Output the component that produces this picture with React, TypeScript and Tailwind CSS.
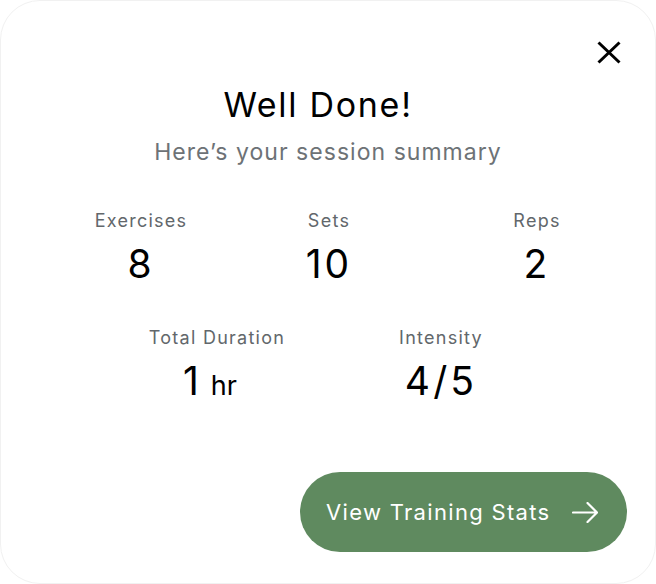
import React from 'react';

const Stat: React.FC<{ label: string; value: React.ReactNode; className?: string }> = ({ label, value, className }) => (
  <div className={`flex shrink-0 flex-col items-center whitespace-nowrap ${className ?? ''}`}>
    <span className="text-[18px] leading-[22px] tracking-[0.07em] text-[#62676b]">{label}</span>
    <span className="mt-[10px] text-[39px] leading-[44px] tracking-[0.08em] text-black">{value}</span>
  </div>
);

export default function App() {
  return (
    <div className="w-[656px] h-[584px] bg-white" style={{ fontFamily: 'Inter, "Noto Sans", sans-serif' }}>
      <div className="relative w-full h-full rounded-[40px] border border-[#f1f1f1] bg-white">
        <button className="absolute left-[596px] top-[40px] w-[24px] h-[23px] flex items-center justify-center" aria-label="Close">
          <svg width="24" height="23" viewBox="0 0 24 23" fill="none" stroke="#000" strokeWidth="3">
            <path d="M1.5 1.5L22.5 21.5M22.5 1.5L1.5 21.5" />
          </svg>
        </button>

        <div className="flex flex-col items-center pt-[83px]">
          <h1 className="pr-[20px] text-[34px] leading-[42px] tracking-[0.05em] text-black">Well Done!</h1>
          <p className="mt-[12px] text-[23px] leading-[28px] tracking-[0.045em] text-[#6d7276]">Here’s your session summary</p>
        </div>

        <div className="flex mt-[44px]">
          <Stat label="Exercises" value="8" className="w-[120px] ml-[80px]" />
          <Stat label="Sets" value="10" className="w-[120px] ml-[68px]" />
          <Stat label="Reps" value="2" className="w-[120px] ml-[88px]" />
        </div>

        <div className="flex mt-[41px]">
          <Stat
            label="Total Duration"
            value={
              <span className="mr-[14px] tracking-normal">
                1<span className="ml-[12px] text-[27px]">hr</span>
              </span>
            }
            className="w-[160px] ml-[136px]"
          />
          <Stat label="Intensity" value="4/5" className="w-[160px] ml-[64px]" />
        </div>

        <div className="flex justify-end pr-[28px] mt-[64px]">
          <button className="w-[327px] h-[80px] rounded-full bg-[#5f8a5f] flex items-center pl-[26px] pr-[29px] justify-between text-white">
            <span className="text-[22px] tracking-[0.06em]">View Training Stats</span>
            <svg width="26" height="21" viewBox="0 0 26 21" fill="none" stroke="#fff" strokeWidth="2.2" strokeLinecap="round" strokeLinejoin="round">
              <path d="M1 10.5H25M15.5 1L25 10.5L15.5 20" />
            </svg>
          </button>
        </div>
      </div>
    </div>
  );
}
